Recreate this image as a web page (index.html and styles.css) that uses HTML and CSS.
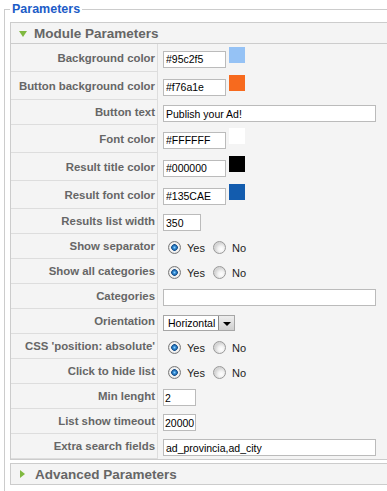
FILE: index.html
```html
<!DOCTYPE html>
<html lang="en">
<head>
    <meta charset="UTF-8">
    <title>Module Parameters</title>
    <link rel="stylesheet" href="styles.css">
</head>
<body>
    <fieldset class="adminform">
        <legend>Parameters</legend>

        <div class="panel">
            <h3 class="panel-title"><span class="arrow arrow-down"></span>Module Parameters</h3>
            <div class="params">
                <div class="param param-color">
                    <label class="param-key">Background color</label>
                    <div class="param-value">
                        <input type="text" class="inputbox input-color" value="#95c2f5">
                        <span class="swatch" style="background-color: #95c2f5"></span>
                    </div>
                </div>
                <div class="param param-color">
                    <label class="param-key">Button background color</label>
                    <div class="param-value">
                        <input type="text" class="inputbox input-color" value="#f76a1e">
                        <span class="swatch" style="background-color: #f76a1e"></span>
                    </div>
                </div>
                <div class="param">
                    <label class="param-key">Button text</label>
                    <div class="param-value">
                        <input type="text" class="inputbox input-wide" value="Publish your Ad!">
                    </div>
                </div>
                <div class="param param-color">
                    <label class="param-key">Font color</label>
                    <div class="param-value">
                        <input type="text" class="inputbox input-color" value="#FFFFFF">
                        <span class="swatch" style="background-color: #FFFFFF"></span>
                    </div>
                </div>
                <div class="param param-color">
                    <label class="param-key">Result title color</label>
                    <div class="param-value">
                        <input type="text" class="inputbox input-color" value="#000000">
                        <span class="swatch" style="background-color: #000000"></span>
                    </div>
                </div>
                <div class="param param-color">
                    <label class="param-key">Result font color</label>
                    <div class="param-value">
                        <input type="text" class="inputbox input-color" value="#135CAE">
                        <span class="swatch" style="background-color: #135CAE"></span>
                    </div>
                </div>
                <div class="param">
                    <label class="param-key">Results list width</label>
                    <div class="param-value">
                        <input type="text" class="inputbox input-num" value="350">
                    </div>
                </div>
                <div class="param">
                    <label class="param-key">Show separator</label>
                    <div class="param-value">
                        <input type="radio" class="radio" name="separator" checked><span class="radio-label">Yes</span>
                        <input type="radio" class="radio" name="separator"><span class="radio-label">No</span>
                    </div>
                </div>
                <div class="param">
                    <label class="param-key">Show all categories</label>
                    <div class="param-value">
                        <input type="radio" class="radio" name="allcats" checked><span class="radio-label">Yes</span>
                        <input type="radio" class="radio" name="allcats"><span class="radio-label">No</span>
                    </div>
                </div>
                <div class="param">
                    <label class="param-key">Categories</label>
                    <div class="param-value">
                        <input type="text" class="inputbox input-wide" value="">
                    </div>
                </div>
                <div class="param">
                    <label class="param-key">Orientation</label>
                    <div class="param-value">
                        <div class="selectbox">
                            <span class="select-text">Horizontal</span>
                            <span class="select-btn"></span>
                        </div>
                    </div>
                </div>
                <div class="param">
                    <label class="param-key">CSS 'position: absolute'</label>
                    <div class="param-value">
                        <input type="radio" class="radio" name="absolute" checked><span class="radio-label">Yes</span>
                        <input type="radio" class="radio" name="absolute"><span class="radio-label">No</span>
                    </div>
                </div>
                <div class="param">
                    <label class="param-key">Click to hide list</label>
                    <div class="param-value">
                        <input type="radio" class="radio" name="hidelist" checked><span class="radio-label">Yes</span>
                        <input type="radio" class="radio" name="hidelist"><span class="radio-label">No</span>
                    </div>
                </div>
                <div class="param">
                    <label class="param-key">Min lenght</label>
                    <div class="param-value">
                        <input type="text" class="inputbox input-short" value="2">
                    </div>
                </div>
                <div class="param">
                    <label class="param-key">List show timeout</label>
                    <div class="param-value">
                        <input type="text" class="inputbox input-short" value="20000">
                    </div>
                </div>
                <div class="param">
                    <label class="param-key">Extra search fields</label>
                    <div class="param-value">
                        <input type="text" class="inputbox input-wide" value="ad_provincia,ad_city">
                    </div>
                </div>
            </div>
        </div>

        <div class="panel">
            <h3 class="panel-title"><span class="arrow arrow-right"></span>Advanced Parameters</h3>
        </div>
    </fieldset>
</body>
</html>
```

FILE: styles.css
```css
/* Reset básico */
body {
    margin: 0;
    background-color: #fff;
    font-family: "Liberation Sans", Arial, sans-serif;
    font-size: 11px;
    color: #333;
    overflow: hidden;
}

fieldset.adminform {
    box-sizing: border-box;
    height: calc(100vh - 2px);
    margin: 2px 0 0 4px;
    padding: 6px 0 0 5px;
    border: 1px solid #ccc;
    border-right: 0;
    border-bottom: 0;
}

fieldset.adminform legend {
    padding: 0 2px;
    color: #1c5cc7;
    font-size: 12.5px;
    font-weight: bold;
    line-height: 14px;
}

/* Paineis */
.panel {
    border: 1px solid #ccc;
    border-right: 0;
    background-color: #f4f4f4;
    margin-bottom: 3px;
}

.panel-title {
    margin: 0;
    height: 20px;
    display: flex;
    align-items: center;
    padding-left: 8px;
    font-size: 13.5px;
    font-weight: bold;
    color: #666;
}

.panel .params {
    border-top: 1px solid #ccc;
}

.arrow {
    width: 0;
    height: 0;
}

.arrow-down {
    border-left: 4px solid transparent;
    border-right: 4px solid transparent;
    border-top: 6px solid #80b940;
    margin-right: 7px;
    margin-top: 1px;
}

.arrow-right {
    border-top: 4px solid transparent;
    border-bottom: 4px solid transparent;
    border-left: 5px solid #80b940;
    margin-right: 10px;
    margin-left: 1px;
}

/* Linhas de parametros */
.param {
    display: flex;
    height: 25px;
}

.param-color {
    height: 28px;
}

.param-key {
    width: 147px;
    box-sizing: border-box;
    display: flex;
    align-items: center;
    justify-content: flex-end;
    padding-right: 2px;
    border-right: 1px solid #ddd;
    border-bottom: 1px solid #ddd;
    font-size: 11.4px;
    font-weight: bold;
    color: #666;
    white-space: nowrap;
}

.param-value {
    flex: 1;
    display: flex;
    align-items: center;
    padding-left: 5px;
}

.inputbox {
    box-sizing: border-box;
    height: 17px;
    margin: 2px 0 0 0;
    padding: 0 2px;
    border: 1px solid #bbb;
    background-color: #fff;
    font-family: "Liberation Sans", Arial, sans-serif;
    font-size: 10.5px;
    color: #000;
    outline: none;
}

.input-color {
    width: 63px;
}

.input-wide {
    width: 213px;
}

.input-num {
    width: 38px;
}

.input-short {
    width: 33px;
    padding: 0 1px;
}

.swatch {
    width: 16px;
    height: 16px;
    margin-left: 3px;
    margin-bottom: 6px;
}

/* Radios estilo XP */
.radio {
    appearance: none;
    -webkit-appearance: none;
    box-sizing: border-box;
    width: 13px;
    height: 13px;
    margin: 1px 6px 0 5px;
    border-radius: 50%;
    border: 1px solid #9a9a9a;
    background: radial-gradient(circle at 65% 65%, #ffffff 0, #f2f2f2 3px, #d6d6d6 6px);
}

.radio + .radio-label + .radio {
    margin-left: 8px;
}

.radio:checked {
    border-color: #7a7a7a;
    background: radial-gradient(circle at 50% 50%, #8fd0ff 0, #2f88d0 1.5px, #164f8c 3px, #e9e9e9 3.6px, #f6f6f6 4.5px, #cfcfcf 6px);
}

.radio-label {
    color: #222;
    font-size: 11px;
    margin-top: 2px;
}

/* Select */
.selectbox {
    box-sizing: border-box;
    width: 72px;
    height: 16px;
    margin-top: 2px;
    display: flex;
    align-items: center;
    border: 1px solid #a6a6a6;
    background-color: #fff;
}

.select-text {
    flex: 1;
    padding-left: 4px;
    font-size: 10.5px;
    color: #000;
}

.select-btn {
    width: 16px;
    height: 14px;
    box-sizing: border-box;
    border-left: 1px solid #888;
    background: linear-gradient(#eee, #cfcfcf);
    display: flex;
    align-items: center;
    justify-content: center;
}

.select-btn::after {
    content: "";
    border-left: 4px solid transparent;
    border-right: 4px solid transparent;
    border-top: 4px solid #000;
    margin-top: 2px;
}
```
